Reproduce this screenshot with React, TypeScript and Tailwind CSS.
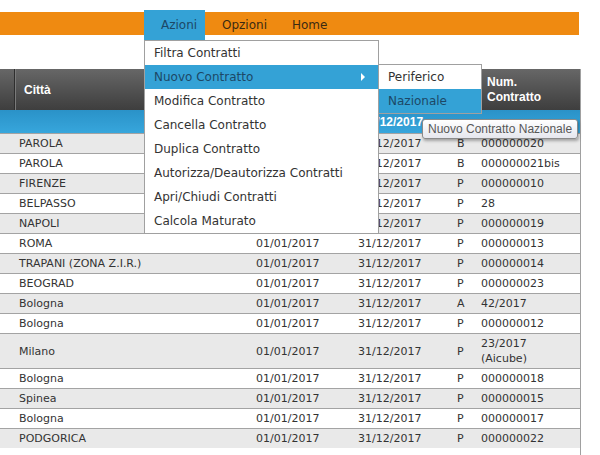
import React from 'react';

type Row = { city: string; type: string; num: string; tall?: boolean };

const rows: Row[] = [
  { city: 'PAROLA', type: 'B', num: '000000020' },
  { city: 'PAROLA', type: 'B', num: '000000021bis' },
  { city: 'FIRENZE', type: 'P', num: '000000010' },
  { city: 'BELPASSO', type: 'P', num: '28' },
  { city: 'NAPOLI', type: 'P', num: '000000019' },
  { city: 'ROMA', type: 'P', num: '000000013' },
  { city: 'TRAPANI (ZONA Z.I.R.)', type: 'P', num: '000000014' },
  { city: 'BEOGRAD', type: 'P', num: '000000023' },
  { city: 'Bologna', type: 'A', num: '42/2017' },
  { city: 'Bologna', type: 'P', num: '000000012' },
  { city: 'Milano', type: 'P', num: '23/2017 (Aicube)', tall: true },
  { city: 'Bologna', type: 'P', num: '000000018' },
  { city: 'Spinea', type: 'P', num: '000000015' },
  { city: 'Bologna', type: 'P', num: '000000017' },
  { city: 'PODGORICA', type: 'P', num: '000000022' },
];

const azioni = [
  'Filtra Contratti',
  'Nuovo Contratto',
  'Modifica Contratto',
  'Cancella Contratto',
  'Duplica Contratto',
  'Autorizza/Deautorizza Contratti',
  'Apri/Chiudi Contratti',
  'Calcola Maturato',
];

const cols = 'grid grid-cols-[15px_237px_102px_99px_24px_103px]';

const App: React.FC = () => {
  return (
    <div className="relative w-[600px] h-[455px] overflow-hidden bg-white flex flex-col font-['DejaVu_Sans',Verdana,sans-serif] text-[#333]">
      {/* menu bar */}
      <nav className="relative z-20 mt-[12px] h-[23px] w-[579px] shrink-0 bg-[#ef8a11] flex pl-[144px] text-[12px]">
        <div className="relative -mt-[2px] h-[30px] w-[61px] pl-[17px] flex items-center bg-[#34a2d6] text-[#1d4866]">
          Azioni
          <div className="absolute left-0 top-[30px] w-[235px] border border-[#a0a0a0] bg-white text-[#333]">
            {azioni.map((a) =>
              a === 'Nuovo Contratto' ? (
                <div key={a} className="relative h-[24px] pl-[9px] flex items-center bg-[#34a2d6] text-[#1d4866]">
                  {a}
                  <span className="absolute right-[13px] top-[8px] w-0 h-0 border-y-[4px] border-y-transparent border-l-[4px] border-l-white" />
                  <div className="absolute left-[233px] -top-px w-[104px] border border-[#a0a0a0] bg-white">
                    <div className="h-[24px] pl-[9px] flex items-center text-[#333]">Periferico</div>
                    <div className="h-[24px] pl-[9px] flex items-center bg-[#34a2d6] text-[#1d4866]">Nazionale</div>
                  </div>
                </div>
              ) : (
                <div key={a} className="h-[24px] pl-[9px] flex items-center">
                  {a}
                </div>
              )
            )}
          </div>
        </div>
        <div className="-mt-[2px] h-[30px] pl-[17px] pr-[8px] flex items-center text-[#3b2a12]">Opzioni</div>
        <div className="-mt-[2px] h-[30px] pl-[17px] pr-[8px] flex items-center text-[#3b2a12]">Home</div>
      </nav>

      {/* table */}
      <div className="mt-[34px] w-[581px] flex-1 border-r border-[#a0a0a0] text-[11px]">
        <div className={`${cols} h-[41px] bg-gradient-to-b from-[#676767] to-[#3e3e3e] text-white font-bold text-[12px] font-['Liberation_Sans',Arial,sans-serif]`}>
          <div className="border-r border-[#2e2e2e] shadow-[1px_0_0_#7a7a7a]" />
          <div className="pl-[9px] flex items-center">Città</div>
          <div />
          <div />
          <div />
          <div className="pl-[10px] flex flex-col justify-center leading-[15px]">
            <span>Num.</span>
            <span>Contratto</span>
          </div>
        </div>
        <div className={`${cols} h-[23px] items-center bg-gradient-to-b from-[#2a92c8] to-[#37a6dc] text-white font-bold text-[12px] font-['Liberation_Sans',Arial,sans-serif]`}>
          <div />
          <div />
          <div className="pl-[9px]">01/01/2017</div>
          <div className="pl-[9px]">31/12/2017</div>
          <div />
          <div />
        </div>
        {rows.map((r, i) => (
          <div
            key={i}
            className={`${cols} items-center border-t border-[#a3a3a3] leading-[15px] ${r.tall ? 'h-[35px]' : 'h-[20px]'} ${i % 2 === 0 ? 'bg-[#e9e9e9]' : 'bg-white'}`}
          >
            <div />
            <div className="pl-[4px]">{r.city}</div>
            <div className="pl-[4px]">01/01/2017</div>
            <div className="pl-[4px]">31/12/2017</div>
            <div className="pl-[4px]">{r.type}</div>
            <div className="pl-[4px] pr-[6px]">{r.num}</div>
          </div>
        ))}
      </div>

      {/* tooltip */}
      <div className="absolute z-30 left-[422px] top-[119px] h-[20px] px-[5px] flex items-center whitespace-nowrap rounded-[3px] border border-[#8a8a8a] bg-gradient-to-b from-white to-[#e6e7ee] shadow-[1px_2px_3px_rgba(0,0,0,0.3)] text-[12px] text-[#575757] font-['Liberation_Sans',Arial,sans-serif]">
        Nuovo Contratto Nazionale
      </div>
    </div>
  );
};

export default App;
